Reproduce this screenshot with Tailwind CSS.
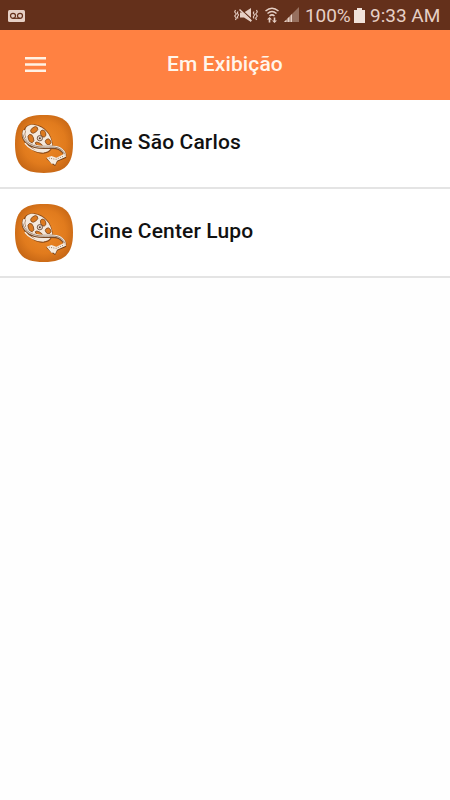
<!DOCTYPE html>
<html lang="pt-BR">
<head>
  <meta charset="utf-8"/>
  <meta name="viewport" content="width=device-width, initial-scale=1.0"/>
  <title>Em Exibição</title>
  <script src="https://cdn.jsdelivr.net/npm/@tailwindcss/browser@4"></script>
</head>
<body class="bg-[#fefefe] font-[Roboto,sans-serif] overflow-hidden">

  <!-- Cinema logo, shared by the list items -->
  <svg class="absolute w-0 h-0">
    <defs>
      <radialGradient id="logo-bg" cx="50%" cy="48%" r="62%">
        <stop offset="0" stop-color="#ee8a28"/>
        <stop offset="0.6" stop-color="#e17b1d"/>
        <stop offset="1" stop-color="#bd6013"/>
      </radialGradient>
    </defs>
    <symbol id="logo" viewBox="22 20 175 175">
      <path fill="url(#logo-bg)" d="M109 20C172 20 197 43 197 107S172 195 109 195S22 172 22 107S46 20 109 20Z"/>
      <!-- reel -->
      <path fill="#8a4815" d="M48 72C47 54 64 46 80 48C110 51 133 76 136 110C134 132 118 139 98 136C69 130 46 106 48 72Z"/>
      <path fill="#f5e9dc" d="M52 72C52 55 65 48 80 50C109 54 131 78 134 108C132 126 119 134 103 132C73 127 52 102 52 72Z"/>
      <g fill="#dc7a20" stroke="#70401d" stroke-width="2">
        <ellipse cx="80" cy="65" rx="8" ry="12" transform="rotate(52 80 65)"/>
        <ellipse cx="107" cy="76" rx="8" ry="11" transform="rotate(-18 107 76)"/>
        <ellipse cx="70" cy="91" rx="8" ry="13" transform="rotate(-20 70 91)"/>
        <ellipse cx="122" cy="101" rx="8" ry="9" transform="rotate(-38 122 101)"/>
        <ellipse cx="94" cy="109" rx="12" ry="5" transform="rotate(28 94 109)"/>
      </g>
      <circle cx="97" cy="90" r="8" fill="#e8d8c8" stroke="#5d4030" stroke-width="2.5"/>
      <circle cx="97" cy="90" r="3" fill="#5d4030"/>
      <!-- film strip -->
      <g fill="none" stroke-linecap="round">
        <path stroke="#7a4a25" stroke-width="10" d="M49 70C42 92 58 108 82 115C112 123 138 111 157 122C166 128 173 136 172 143"/>
        <path stroke="#f4e8db" stroke-width="7" d="M49 69C43 90 59 106 83 113C113 121 139 110 157 120C166 126 173 134 172 141"/>
        <path stroke="#6e503b" stroke-width="2" d="M46 80C49 98 67 109 84 114C112 121 139 112 156 121C166 127 172 134 172 140"/>
        <path stroke="#f5e9dc" stroke-width="4" d="M53 106C65 122 83 130 107 132"/>
      </g>
      <path fill="#6b3b17" d="M116 151L132 145L147 150L171 139L177 149L150 160L143 174L132 166Z"/>
      <path fill="#f7ecdf" d="M117 149L132 144L147 149L171 137L176 146L149 158L143 171L137 166L133 168Z"/>
      <path stroke="#69401f" stroke-width="2" stroke-dasharray="3 4" fill="none" d="M124 150L146 154L171 143"/>
    </symbol>
  </svg>

  <!-- Status bar -->
  <div class="h-[30px] bg-[#64301b] flex items-center text-[#e6cfc5] pl-2 pr-[10px]">
    <svg class="w-[17px] h-3 mt-px" viewBox="0 0 17 12">
      <rect width="17" height="12" rx="1.5" fill="#e6cfc5"/>
      <g fill="none" stroke="#64301b" stroke-width="1.2">
        <circle cx="5" cy="5.8" r="2.5"/>
        <circle cx="12" cy="5.8" r="2.5"/>
        <path d="M5 8.3H12"/>
      </g>
    </svg>

    <div class="ml-auto flex items-center">
      <!-- mute / vibrate -->
      <svg class="w-6 h-4" viewBox="0 0 24 16" fill="none" stroke="#e6cfc5" stroke-width="1.1">
        <path d="M1.500 3L.7 5L2.300 7L.7 9L2.300 11L1.500 13M4 4.500L3.300 6L4.500 8L3.300 10L4 11.500M20 4.500L19.300 6L20.500 8L19.300 10L20 11.500M22.500 3L23.300 5L21.700 7L23.300 9L21.700 11L22.500 13"/>
        <path fill="#e6cfc5" stroke="none" d="M6 5.500H10L17 1V15L10 10.500H6Z"/>
        <path stroke="#64301b" stroke-width="1.2" d="M6.500 2L18 12.500"/>
        <path stroke-width="1.5" d="M5.500 2.500L17.500 14"/>
      </svg>
      <!-- wifi -->
      <svg class="w-4 h-4 ml-[6px]" viewBox="0 0 16 16" fill="none" stroke="#e6cfc5" stroke-width="1.5">
        <path d="M1.500 4Q8 -1.500 14.500 4M3.500 6.500Q8 2.500 12.500 6.500M5.500 9Q8 6.800 10.500 9"/>
        <path fill="#e6cfc5" stroke="none" d="M5.500 10L8 12.500H6.300V15.500H4.700V12.500H3ZM10.500 16L8 13.500H9.700V10.500H11.300V13.500H13Z"/>
      </svg>
      <!-- signal -->
      <svg class="w-4 h-4 ml-1" viewBox="0 0 16 16">
        <path fill="#97705f" d="M15 0V15H0Z"/>
        <path fill="#e6cfc5" d="M0 15L2.500 12.500V15ZM3.500 15V11.500L5.500 9.500V15ZM6.500 15V8.500L8 7V15Z"/>
      </svg>
      <span class="ml-[5px] text-[19px] leading-[30px] w-[46px] whitespace-nowrap tracking-[-0.1px] pt-[2px]">100%</span>
      <!-- battery -->
      <svg class="w-[11px] h-[15px] ml-[3px] mt-px" viewBox="0 0 11 15" fill="#f0e2da">
        <path d="M3 0H8V2H11V15H0V2H3Z"/>
      </svg>
      <span class="ml-[5px] text-[19px] leading-[30px] w-[70px] whitespace-nowrap pt-[2px]">9:33 AM</span>
    </div>
  </div>

  <!-- Header -->
  <header class="h-[70px] bg-[#ff8142] grid grid-cols-[1fr_auto_1fr] items-center">
    <button class="ml-[25px] w-[21px] -mt-[2px]">
      <svg class="w-[21px] h-[15px]" viewBox="0 0 21 15" fill="#fff2e5">
        <path d="M0 0H21V2.500H0ZM0 6.200H21V8.700H0ZM0 12.400H21V14.900H0Z"/>
      </svg>
    </button>
    <h1 class="text-[#fff5eb] text-[21px] font-medium leading-7 whitespace-nowrap tracking-[0.12px] -mt-[2px]">Em Exibição</h1>
  </header>

  <!-- Cinemas -->
  <ul>
    <li class="h-[89px] bg-white border-b-2 border-[#e4e4e4] flex pl-[15px] pt-[15px]">
      <svg class="w-[58px] h-[58px]"><use href="#logo"/></svg>
      <span class="ml-[17px] mt-[13px] text-[21px] font-medium leading-7 tracking-[0.13px] text-[#111111]">Cine São Carlos</span>
    </li>
    <li class="h-[89px] bg-white border-b-2 border-[#e4e4e4] flex pl-[15px] pt-[15px]">
      <svg class="w-[58px] h-[58px]"><use href="#logo"/></svg>
      <span class="ml-[17px] mt-[13px] text-[21px] font-medium leading-7 tracking-[0.13px] text-[#111111]">Cine Center Lupo</span>
    </li>
  </ul>

</body>
</html>
